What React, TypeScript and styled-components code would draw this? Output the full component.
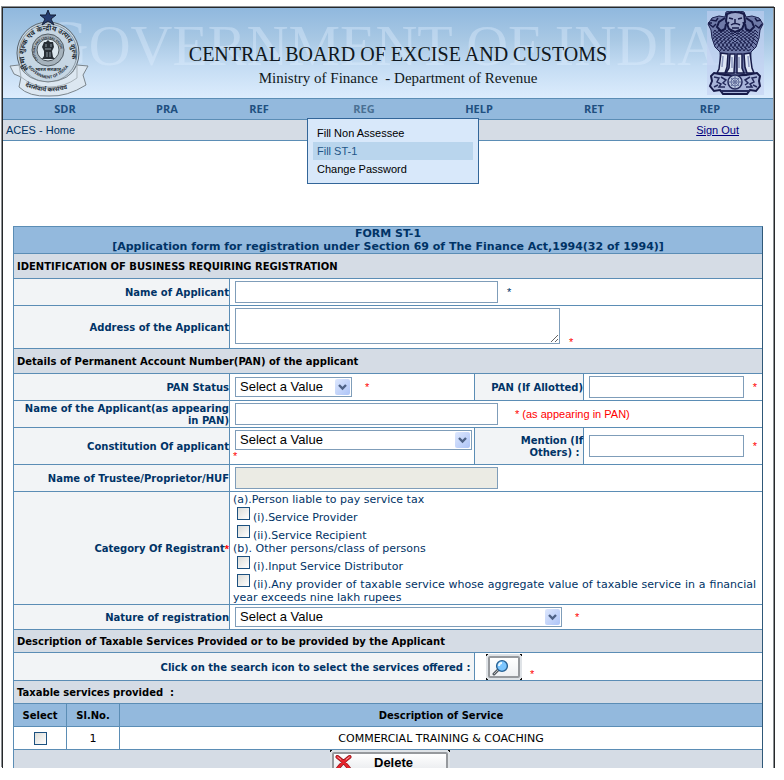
import React, { useState } from "react";
import styled, { createGlobalStyle } from "styled-components";

const LINE = "#5b8db5";
const NAVY = "#003366";
const BLUE = "#93b9dd";
const GREY = "#d5dce5";
const PALE = "#f2f4f6";

const GlobalStyle = createGlobalStyle`
  *, *::before, *::after { box-sizing: border-box; }
  body {
    margin: 0;
    background: #fff;
    color: ${NAVY};
    font-family: "DejaVu Sans", Verdana, sans-serif;
    font-size: 10px;
    line-height: 12px;
  }
  button, input, select, textarea { font: inherit; margin: 0; }
`;

const Page = styled.div`
  padding: 7px 9px 12px 2px;
`;

const Frame = styled.div`
  border: 1px solid #26282a;
  border-bottom: 0;
  padding-right: 1px;
  box-shadow: -1px -1px 0 #8c9094, inset -1px 0 0 #8c9094;
`;

const Banner = styled.header`
  position: relative;
  display: flex;
  align-items: center;
  height: 90px;
  padding: 0 9px 0 6px;
  background: linear-gradient(#90b8de, #a8c8e4 35%, #c4dcf3 65%, #dcecfd);
`;

const Watermark = styled.div`
  position: absolute;
  left: 38px;
  top: 0;
  font-family: "Liberation Serif", serif;
  font-size: 58px;
  line-height: 70px;
  white-space: nowrap;
  color: rgba(226, 240, 255, 0.38);
  &::first-letter { font-size: 66px; }
`;

const Titles = styled.div`
  position: relative;
  flex: 1;
  text-align: center;
  color: #101820;
  white-space: nowrap;
  padding-top: 25px;
`;

const Title = styled.h1`
  margin: 0;
  font-family: "Liberation Serif", serif;
  font-size: 20px;
  line-height: 24px;
  font-weight: 400;
`;

const Subtitle = styled.p`
  margin: 0;
  font-family: "Liberation Serif", serif;
  font-size: 15px;
  line-height: 24px;
  white-space: pre;
`;

const Emblem = styled.svg`
  position: relative;
  flex: none;
`;

const Nav = styled.nav`
  display: grid;
  grid-template-columns: 124fr 80fr 104fr 106fr 124fr 106fr 126fr;
  height: 22px;
  border-top: 1px solid ${LINE};
  border-bottom: 1px solid ${LINE};
  background: ${BLUE};
`;

const NavItem = styled.div`
  position: relative;
  display: flex;
  justify-content: center;
`;

const NavLink = styled.a<{ $open?: boolean }>`
  font-family: "Open Sans", Tahoma, sans-serif;
  font-size: 11px;
  line-height: 20px;
  font-weight: 700;
  text-decoration: none;
  color: ${(p) => (p.$open ? "#4a7093" : "#1f5080")};
`;

const Menu = styled.div`
  position: absolute;
  z-index: 2;
  top: 19px;
  left: -4px;
  width: 172px;
  padding: 5px;
  border: 1px solid #336699;
  background: #d8e8fa;
`;

const MenuLink = styled.a<{ $active?: boolean }>`
  display: block;
  padding: 0 4px;
  font-family: "Liberation Sans", Arial, sans-serif;
  font-size: 11px;
  line-height: 18px;
  text-decoration: none;
  color: ${(p) => (p.$active ? "#1f5587" : "#000")};
  background: ${(p) => (p.$active ? "#b9d5ed" : "transparent")};
`;

const Crumbs = styled.div`
  display: flex;
  justify-content: space-between;
  padding: 0 34px 0 3px;
  border-bottom: 1px solid ${LINE};
  background: ${GREY};
  font-family: "Liberation Sans", Arial, sans-serif;
  font-size: 11px;
  line-height: 20px;
`;

const SignOut = styled.a`
  color: #000080;
`;

const Form = styled.form`
  margin: 85px 10px 0;
  border: 1px solid ${LINE};
  border-right-color: #2f5878;
  border-bottom: 0;
`;

const FormTitle = styled.h2`
  margin: 0;
  min-height: 27px;
  border-bottom: 1px solid ${LINE};
  background: ${BLUE};
  text-align: center;
  font-size: 11px;
  line-height: 13px;
  font-weight: 700;
`;

const Section = styled.h3<{ $short?: boolean }>`
  margin: 0;
  padding: 2px 3px 0;
  border-bottom: 1px solid ${LINE};
  background: ${GREY};
  color: #000;
  font-size: 10px;
  line-height: ${(p) => (p.$short ? 20 : 22)}px;
  font-weight: 700;
  white-space: pre;
`;

const Row = styled.div<{ $kind?: "pair" | "wide"; $h: number }>`
  display: grid;
  grid-template-columns: ${(p) =>
    p.$kind === "pair"
      ? "216fr 245fr 109fr 178fr"
      : p.$kind === "wide"
        ? "461fr 287fr"
        : "216fr 532fr"};
  min-height: ${(p) => p.$h}px;
  border-bottom: 1px solid ${LINE};
`;

const Label = styled.label`
  display: flex;
  align-items: center;
  justify-content: flex-end;
  min-width: 0;
  padding-top: 2px;
  border-right: 1px solid ${LINE};
  background: ${PALE};
  font-weight: 700;
  text-align: right;
`;

const SecondLabel = styled(Label)`
  border-left: 1px solid ${LINE};
  margin-left: -1px;
`;

const Value = styled.div<{ $end?: boolean }>`
  display: flex;
  align-items: ${(p) => (p.$end ? "flex-end" : "center")};
  flex-wrap: wrap;
  min-width: 0;
  padding: 0 5px;
`;

const StackValue = styled(Value)`
  flex-direction: column;
  align-items: flex-start;
  flex-wrap: nowrap;
  padding: 2px 3px;
`;

const SpreadValue = styled(Value)`
  justify-content: space-between;
  flex-wrap: nowrap;
`;

const Star = styled.span<{ $gap?: number; $dark?: boolean }>`
  margin-left: ${(p) => p.$gap ?? 0}px;
  font-family: "Liberation Sans", Arial, sans-serif;
  font-size: 11px;
  color: ${(p) => (p.$dark ? NAVY : "#f00")};
`;

const TextBox = styled.input<{ $w: number }>`
  width: ${(p) => p.$w}px;
  height: 22px;
  padding: 0 3px;
  border: 1px solid #7f9db9;
  background: #fff;
  &:disabled { background: #ebebe4; }
`;

const Area = styled.textarea`
  align-self: flex-start;
  width: 325px;
  height: 36px;
  margin-top: 2px;
  border: 1px solid #7f9db9;
  resize: both;
`;

const SelectWrap = styled.div<{ $w: number }>`
  display: grid;
  width: ${(p) => p.$w}px;
  height: 20px;
`;

const SelectBox = styled.select`
  grid-area: 1 / 1;
  appearance: none;
  padding: 0 4px;
  border: 1px solid #7f9db9;
  border-radius: 0;
  background: #fff;
  color: #000;
  font-family: "Liberation Sans", Arial, sans-serif;
  font-size: 13px;
`;

const SelectArrow = styled.svg`
  grid-area: 1 / 1;
  justify-self: end;
  align-self: center;
  margin-right: 2px;
  pointer-events: none;
`;

const Inset = styled.div`
  padding-left: 2px;
`;

const Options = styled.div`
  padding: 1px 6px 0 3px;
  font-size: 11px;
  line-height: 13px;
`;

const Option = styled.label`
  display: block;
  text-align: justify;
`;

const Tick = styled.input`
  appearance: none;
  width: 13px;
  height: 13px;
  border: 1px solid #1c5180;
  background: linear-gradient(135deg, #dcdcd7, #fff);
  &:checked { background: #1c5180; }
`;

const OptionTick = styled(Tick)`
  margin: 1px 3px 0 4px;
  vertical-align: 1px;
`;

const corner = (x: string, y: string) =>
  `linear-gradient(#111, #111) ${x} ${y} / 2px 1px no-repeat, linear-gradient(#111, #111) ${x} ${y} / 1px 2px no-repeat`;

const Corners = styled.span<{ $gap?: number }>`
  display: flex;
  margin-left: ${(p) => p.$gap ?? 0}px;
  padding: 2px;
  background:
    ${corner("left", "top")}, ${corner("right", "top")},
    ${corner("left", "bottom")}, ${corner("right", "bottom")}, #dfe3e7;
`;

const SearchButton = styled.button`
  width: 32px;
  height: 22px;
  padding: 0;
  border: 2px solid #96999d;
  border-radius: 2px;
  background: linear-gradient(#fff, #eef0f3);
`;

const ButtonIcon = styled.svg`
  display: block;
`;

const ServicesTable = styled.table`
  width: 100%;
  table-layout: fixed;
  border-collapse: separate;
  border-spacing: 0;
  color: #000;
`;

const Cell = styled.td`
  height: 23px;
  padding: 1px 0 0;
  border-bottom: 1px solid ${LINE};
  font-size: 11px;
  text-align: center;
  vertical-align: middle;
  & + & { border-left: 1px solid ${LINE}; }
  & > input { display: block; margin: 0 auto; }
`;

const HeadCell = styled.th<{ $w?: number }>`
  width: ${(p) => (p.$w ? `${p.$w}px` : "auto")};
  height: 23px;
  padding: 1px 0 0;
  border-bottom: 1px solid ${LINE};
  background: ${BLUE};
  & + & { border-left: 1px solid ${LINE}; }
`;

const Footer = styled.div`
  display: flex;
  align-items: flex-start;
  justify-content: center;
  height: 18px;
  padding-left: 4px;
  overflow: hidden;
  background: ${GREY};
`;

const DeleteButton = styled.button`
  display: flex;
  align-items: center;
  gap: 22px;
  width: 116px;
  height: 21px;
  padding: 0 1px;
  border: 2px solid #96999d;
  border-radius: 2px;
  background: linear-gradient(#fff, #e9ebee);
  color: #000;
  font-family: "Liberation Sans", Arial, sans-serif;
  font-size: 13px;
  line-height: 14px;
  font-weight: 700;
`;

function CustomsEmblem() {
  const star = "M39 1 41 6 47 6 42 10 45 16 39 12 33 16 36 10 31 6 37 6Z";
  return (
    <Emblem width="80" height="88" viewBox="0 0 80 88" role="img" aria-label="Customs emblem">
      <defs>
        <path id="outerArc" d="M20 60A24 24 0 1 1 58 60" />
        <path id="ringArc" d="M29 51A13 13 0 1 1 49 51" />
        <path id="lowArc" d="M19 58Q39 81 59 58" />
        <path id="ribbonArc" d="M14 76Q40 89 68 76" />
      </defs>
      <circle cx="39" cy="44" r="31" fill="#c6d6e3" stroke="#59646d" />
      <circle cx="39" cy="44" r="29" fill="none" stroke="#8e9ba5" />
      <circle cx="39" cy="41" r="16" fill="#a5b2bc" stroke="#535d65" />
      <circle cx="39" cy="41" r="11" fill="#dbe6ee" stroke="#4d565d" />
      <path d="M35 33h2l2-2 2 2h3l1 5-2 4 1 6 2 2H33l2-3v-5l-2-4Z" fill="#272e36" />
      <path d="M36 40h6M38 43v5M41 43v5M37 35v3M42 35v3" stroke="#8d9aa4" />
      <path d={star} fill="#263d70" stroke="#142039" />
      <path d="M1 57 10 56Q18 72 39 73Q61 72 68 56L79 57 74 66 77 76Q58 88 40 87Q20 88 10 78L12 68 5 65Z" fill="#dce7f1" stroke="#7b858c" />
      <path d="M12 68Q24 78 40 78Q56 78 68 69L68 56M12 68 10 56" fill="none" stroke="#a9b3ba" />
      <g fill="#252d35" fontFamily="Noto Sans, sans-serif" fontWeight="700">
        <text fontSize="7"><textPath href="#outerArc">सीमा शुल्क एवं केन्द्रीय उत्पाद शुल्क</textPath></text>
        <text fontSize="3"><textPath href="#ringArc">CUSTOMS AND CENTRAL EXCISE</textPath></text>
        <text x="39" y="62" fontSize="5" textAnchor="middle">भारत सरकार</text>
        <text fontSize="4"><textPath href="#lowArc">GOVERNMENT OF INDIA</textPath></text>
        <text fontSize="6"><textPath href="#ribbonArc" startOffset="2">देशसेवार्थ करसंचय</textPath></text>
      </g>
    </Emblem>
  );
}

function LionEmblem() {
  return (
    <Emblem width="57" height="84" viewBox="0 0 57 84" role="img" aria-label="State emblem of India">
      <rect width="57" height="84" fill="#c3d0f1" opacity=".6" />
      <path
        d="M19 1 23 0 28 2 33 0 37 1 39 6 45 5 52 7 56 13 53 19 52 27 49 36 44 41 43 62H14L13 41 8 36 5 27 4 19 1 13 5 7 12 5 18 6Z"
        fill="#6f7aa8" stroke="#1a1f4d"
      />
      <g fill="none" stroke="#171b49">
        <path d="M2 13 6 16 9 13M4 9 9 10 11 7M1 12 5 12M48 7 50 10 54 9M48 14 52 17 55 13" strokeWidth="1.5" />
        <path d="M18 7 12 11 10 16 14 20 18 18 19 13M39 7 45 11 47 16 43 20 39 18 38 13" strokeWidth="2" />
        <path d="M20 3Q28-1 37 3L38 11 35 18 28 21 22 18 19 10Z" fill="#9aa5ca" strokeWidth="2" />
        <path d="M22 7 26 8M31 8 35 7M28 8V12M24 14Q28 11 33 14M25 17H32M22 11 20 14M36 11 37 14" strokeWidth="1.5" />
        <path d="M6 22 8 19 10 22 12 19 14 22 16 19 18 22 20 19 22 22 24 20 26 23 28 21 30 23 32 20 34 22 36 19 38 22 40 19 42 22 44 19 46 22 48 19 51 22" />
        <path d="M6 25 8 22 10 25 12 22 14 25 16 22 18 25 20 22 22 25 24 22 26 25 28 23 30 25 32 22 34 25 36 22 38 25 40 22 42 25 44 22 46 25 48 22 51 25" />
        <path d="M6 28 8 25 10 28 12 25 14 28 16 25 18 28 20 25 22 28 24 25 26 28 28 26 30 28 32 25 34 28 36 25 38 28 40 25 42 28 44 25 46 28 48 25 51 28" />
        <path d="M7 31 9 28 11 31 13 28 15 31 17 28 19 31 21 28 23 31 25 28 28 31 31 28 33 31 35 28 37 31 39 28 41 31 43 28 45 31 47 28 50 31" />
        <path d="M8 34 10 31 12 34 14 31 16 34 18 31 20 34 22 31 24 34 26 31 28 34 30 31 32 34 34 31 36 34 38 31 40 34 42 31 44 34 46 31 49 34" />
        <path d="M10 37 12 34 14 37 16 34 18 37 20 34 22 37 24 34 26 37 28 34 30 37 32 34 34 37 36 34 38 37 40 34 42 37 44 34 47 37" />
        <path d="M13 40 15 37 17 40 19 37 21 40 23 37 25 40 27 37 29 40 31 37 33 40 35 37 37 40 39 37 41 40 44 38" />
      </g>
      <g stroke="#171b49" fill="#dde6f6" strokeWidth="1.5">
        <path d="M14 42 12 58 10 62H18L20 56 21 43Z" />
        <path d="M23 43 22 57 19 62H27L28 43Z" />
        <path d="M30 43 30 62H37L35 57 35 43Z" />
        <path d="M37 43 38 56 40 62H47L45 57 43 42Z" />
        <path d="M16 45 15 56M25 46V57M32 46V57M41 45 42 56" stroke="#8d99c0" />
      </g>
      <path
        d="M7 62Q28 67 50 62L53 65 52 70 53 75 49 80 43 79 40 83H16L13 79 7 80 3 75 5 70 4 65Z"
        fill="#a8b4d9" stroke="#171b49" strokeWidth="2"
      />
      <g fill="none" stroke="#252b5c">
        <path d="M7 66 12 67 10 71 14 73 12 76 18 76M14 66 19 69 16 72 19 74M50 66 45 67 47 71 43 73 45 76 39 76M43 66 38 69 41 72 38 74M7 76 11 74M50 76 46 74" strokeWidth="1.5" />
        <path d="M14 80H43" strokeWidth="2" />
        <circle cx="28" cy="71" r="7" fill="#bac7df" strokeWidth="1.5" />
        <circle cx="28" cy="71" r="4" stroke="#6672a0" />
        <circle cx="28" cy="71" r="1" />
        <path d="M28 65V77M22 71H34M24 67 32 75M32 67 24 75" stroke="#6672a0" />
      </g>
    </Emblem>
  );
}

function Arrow() {
  return (
    <SelectArrow width="15" height="16" viewBox="0 0 15 16" aria-hidden="true">
      <defs>
        <linearGradient id="arrowFill" x2="1" y2="1">
          <stop stopColor="#dde7fd" />
          <stop offset="1" stopColor="#adc4f7" />
        </linearGradient>
      </defs>
      <rect width="15" height="16" rx="2" fill="url(#arrowFill)" />
      <path d="M4 6 7.5 9.5 11 6" fill="none" stroke="#4d6185" strokeWidth="2.4" />
    </SelectArrow>
  );
}

function Choice({ id, width }: { id: string; width: number }) {
  return (
    <SelectWrap $w={width}>
      <SelectBox id={id}>
        <option>Select a Value</option>
      </SelectBox>
      <Arrow />
    </SelectWrap>
  );
}

const NAV = ["SDR", "PRA", "REF", "REG", "HELP", "RET", "REP"];
const MENU = ["Fill Non Assessee", "Fill ST-1", "Change Password"];

export default function App() {
  const [active, setActive] = useState(1);
  return (
    <>
      <GlobalStyle />
      <Page>
        <Frame>
          <Banner>
            <Watermark aria-hidden="true">GOVERNMENT OF INDIA</Watermark>
            <CustomsEmblem />
            <Titles>
              <Title>CENTRAL BOARD OF EXCISE AND CUSTOMS</Title>
              <Subtitle>{"Ministry of Finance  - Department of Revenue"}</Subtitle>
            </Titles>
            <LionEmblem />
          </Banner>
          <Nav>
            {NAV.map((name) => (
              <NavItem key={name}>
                <NavLink href="#" $open={name === "REG"}>{name}</NavLink>
                {name === "REG" && (
                  <Menu>
                    {MENU.map((item, i) => (
                      <MenuLink key={item} href="#" $active={i === active} onMouseEnter={() => setActive(i)}>
                        {item}
                      </MenuLink>
                    ))}
                  </Menu>
                )}
              </NavItem>
            ))}
          </Nav>
          <Crumbs>
            <span>ACES - Home</span>
            <SignOut href="#">Sign Out</SignOut>
          </Crumbs>

          <Form onSubmit={(e) => e.preventDefault()}>
            <FormTitle>
              FORM ST-1
              <br />
              [Application form for registration under Section 69 of The Finance Act,1994(32 of 1994)]
            </FormTitle>
            <Section>IDENTIFICATION OF BUSINESS REQUIRING REGISTRATION</Section>
            <Row $h={27}>
              <Label htmlFor="name">Name of Applicant</Label>
              <Value>
                <TextBox id="name" $w={263} />
                <Star $gap={9} $dark>*</Star>
              </Value>
            </Row>
            <Row $h={43}>
              <Label htmlFor="address">Address of the Applicant</Label>
              <Value $end>
                <Area id="address" />
                <Star $gap={9}>*</Star>
              </Value>
            </Row>
            <Section>Details of Permanent Account Number(PAN) of the applicant</Section>
            <Row $kind="pair" $h={27}>
              <Label htmlFor="panStatus">PAN Status</Label>
              <Value>
                <Choice id="panStatus" width={117} />
                <Star $gap={13}>*</Star>
              </Value>
              <SecondLabel htmlFor="pan">PAN (If Allotted)</SecondLabel>
              <SpreadValue>
                <TextBox id="pan" $w={155} />
                <Star>*</Star>
              </SpreadValue>
            </Row>
            <Row $h={27}>
              <Label htmlFor="panName">Name of the Applicant(as appearing in PAN)</Label>
              <Value>
                <TextBox id="panName" $w={263} />
                <Star $gap={17}>* (as appearing in PAN)</Star>
              </Value>
            </Row>
            <Row $kind="pair" $h={37}>
              <Label htmlFor="constitution">Constitution Of applicant</Label>
              <StackValue>
                <Inset><Choice id="constitution" width={237} /></Inset>
                <Star>*</Star>
              </StackValue>
              <SecondLabel htmlFor="mention">Mention (If<br />Others) :&nbsp;</SecondLabel>
              <SpreadValue>
                <TextBox id="mention" $w={155} />
                <Star>*</Star>
              </SpreadValue>
            </Row>
            <Row $h={27}>
              <Label htmlFor="trustee">Name of Trustee/Proprietor/HUF</Label>
              <Value><TextBox id="trustee" $w={263} disabled /></Value>
            </Row>
            <Row $h={113}>
              <Label as="div">Category Of Registrant<Star>*</Star></Label>
              <Options>
                <div>(a).Person liable to pay service tax</div>
                <Option><OptionTick type="checkbox" />(i).Service Provider</Option>
                <Option><OptionTick type="checkbox" />(ii).Service Recipient</Option>
                <div>(b). Other persons/class of persons</div>
                <Option><OptionTick type="checkbox" />(i).Input Service Distributor</Option>
                <Option>
                  <OptionTick type="checkbox" />
                  (ii).Any provider of taxable service whose aggregate value of taxable service in a financial year exceeds nine lakh rupees
                </Option>
              </Options>
            </Row>
            <Row $h={25}>
              <Label htmlFor="nature">Nature of registration</Label>
              <Value>
                <Choice id="nature" width={327} />
                <Star $gap={13}>*</Star>
              </Value>
            </Row>
            <Section $short>Description of Taxable Services Provided or to be provided by the Applicant</Section>
            <Row $kind="wide" $h={28}>
              <Label htmlFor="search">Click on the search icon to select the services offered :&nbsp;</Label>
              <Value $end>
                <Corners $gap={6}>
                  <SearchButton id="search" type="button" aria-label="Search services">
                    <ButtonIcon width="28" height="18" viewBox="0 0 28 18" aria-hidden="true">
                      <path d="M4 16 9 11" stroke="#555b61" strokeWidth="3" strokeLinecap="round" />
                      <path d="M4 16 8 12" stroke="#b9bdc1" />
                      <circle cx="12" cy="8" r="5.4" fill="#7cc6ff" stroke="#286193" strokeWidth="1.4" />
                      <path d="M9 8Q9 5 12 5" fill="none" stroke="#eaf8ff" strokeWidth="2" />
                    </ButtonIcon>
                  </SearchButton>
                </Corners>
                <Star $gap={8}>*</Star>
              </Value>
            </Row>
            <Section $short>{"Taxable services provided  :"}</Section>
            <ServicesTable>
              <thead>
                <tr>
                  <HeadCell $w={52}>Select</HeadCell>
                  <HeadCell $w={53}>Sl.No.</HeadCell>
                  <HeadCell>Description of Service</HeadCell>
                </tr>
              </thead>
              <tbody>
                <tr>
                  <Cell><Tick type="checkbox" aria-label="Select service 1" /></Cell>
                  <Cell>1</Cell>
                  <Cell>COMMERCIAL TRAINING &amp; COACHING</Cell>
                </tr>
              </tbody>
            </ServicesTable>
            <Footer>
              <Corners>
                <DeleteButton type="button">
                  <ButtonIcon width="17" height="16" viewBox="0 0 17 17" aria-hidden="true">
                    <path d="M2 2Q9 7 15 15M15 2Q8 7 2 15" fill="none" stroke="#8e1b20" strokeWidth="4" strokeLinecap="round" />
                    <path d="M2 2Q9 7 15 15M15 2Q8 7 2 15" fill="none" stroke="#e8232b" strokeWidth="2.6" strokeLinecap="round" />
                    <path d="M2 2 6 5M15 2 11 5" stroke="#f7a8a8" />
                  </ButtonIcon>
                  Delete
                </DeleteButton>
              </Corners>
            </Footer>
          </Form>
        </Frame>
      </Page>
    </>
  );
}
